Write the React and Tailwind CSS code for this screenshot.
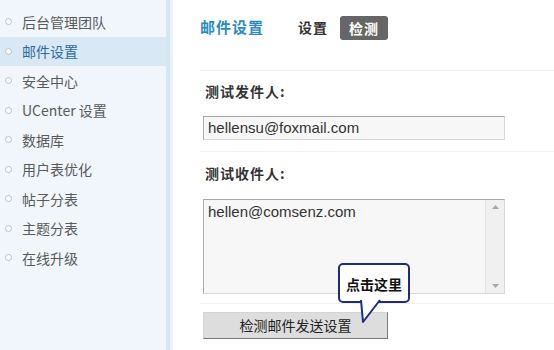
const menu = ['后台管理团队', '邮件设置', '安全中心', 'UCenter 设置', '数据库', '用户表优化', '帖子分表', '主题分表', '在线升级']

const cjk = { fontFamily: '"Noto Sans CJK SC", "Noto Sans", sans-serif' }
const song = { fontFamily: '"Liberation Sans", "Noto Sans CJK SC", sans-serif' }

export default function App() {
  return (
    <div className="flex w-[554px] h-[350px] overflow-hidden bg-white" style={cjk}>
      {/* sidebar */}
      <div className="w-[166px] shrink-0 bg-[#f0f6fb] pt-[7px]">
        {menu.map((item, i) => (
          <div
            key={item}
            className={`flex items-center h-[29.5px] pl-[5px] text-[14px] ${i === 1 ? 'bg-[#d8e8f5] text-[#2d6aa0]' : 'text-[#5a5a5a]'}`}
          >
            <span className="w-[7px] h-[7px] rounded-full border border-[#b8bec4] bg-white mr-[10px]" />
            <span className="leading-none">{item}</span>
          </div>
        ))}
      </div>
      <div className="w-[4px] shrink-0 bg-[#d6e7f4]" />
      <div className="w-[3px] shrink-0 bg-[#e9f2f9]" />

      {/* main */}
      <div className="flex-1 relative">
        <div className="flex items-center h-[58px] pl-[27px] pb-[3px]">
          <span className="text-[15px] font-bold text-[#2a8bc4] tracking-[1px]">邮件设置</span>
          <span className="ml-[34px] text-[14px] font-bold text-[#333] tracking-[1px]">设置</span>
          <span className="ml-[12px] px-[9px] h-[24px] leading-[24px] rounded-[3px] bg-[#666] text-white text-[14px] font-bold tracking-[1px]">检测</span>
        </div>
        <div className="ml-[27px] mt-[12px] border-t border-[#eeeeee]" />

        <div className="pl-[32px] pt-[10px] text-[14px] font-bold text-[#333] tracking-[1px]">测试发件人:</div>
        <div className="ml-[30px] mt-[14px] w-[302px] h-[24px] border border-[#a8a8a8] border-r-[#d8d8d8] border-b-[#d8d8d8] bg-[#f7f7f7] pl-[4px] text-[15px] leading-[22px] text-[#333]" style={song}>
          hellensu@foxmail.com
        </div>
        <div className="ml-[27px] mt-[11px] border-t border-[#f0f0f0]" />

        <div className="pl-[32px] pt-[11px] text-[14px] font-bold text-[#333] tracking-[1px]">测试收件人:</div>
        <div className="ml-[30px] mt-[15px] w-[302px] h-[95px] border border-[#a8a8a8] border-r-[#d8d8d8] border-b-[#d8d8d8] bg-[#f7f7f7] flex">
          <div className="flex-1 pl-[4px] pt-[2px] text-[15px] leading-[20px] text-[#333]" style={song}>hellen@comsenz.com</div>
          <div className="w-[19px] border-l border-[#e2e2e2] bg-[#f0f0f0] flex flex-col justify-between items-center py-[5px]">
            <svg width="7" height="4" viewBox="0 0 7 4"><path d="M0 4 L3.5 0 L7 4 Z" fill="#a8a8a8" /></svg>
            <svg width="7" height="4" viewBox="0 0 7 4"><path d="M0 0 L3.5 4 L7 0 Z" fill="#a8a8a8" /></svg>
          </div>
        </div>
        <div className="ml-[27px] mt-[9px] border-t border-[#f0f0f0]" />

        <div className="ml-[30px] mt-[8px] w-[185px] h-[27px] bg-[#dddddd] border border-[#d4d4d4] border-r-[#7a7a7a] border-b-[#7a7a7a] text-center text-[14px] leading-[25px] text-[#222]">
          检测邮件发送设置
        </div>

        {/* callout */}
        <div className="absolute left-[165px] top-[263px]">
          <div className="relative w-[72px] h-[40px] rounded-[5px] border-2 border-[#1e2b82] bg-white text-center text-[14px] font-bold text-[#111] leading-[38px]">
            点击这里
          </div>
          <svg className="absolute left-[20px] top-[36px]" width="26" height="26" viewBox="0 0 26 26">
            <path d="M3 1 L5 23 L22 1" fill="white" stroke="#1e2b82" strokeWidth="2" strokeLinejoin="round" />
          </svg>
        </div>
      </div>
    </div>
  )
}
